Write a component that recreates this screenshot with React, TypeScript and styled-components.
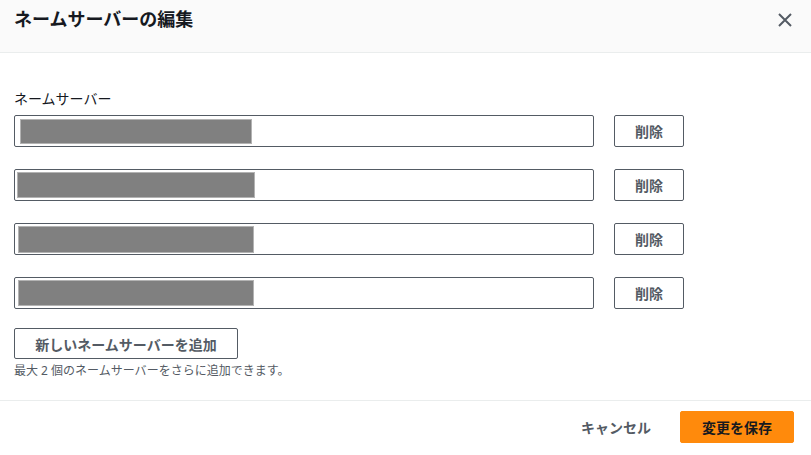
import styled, { createGlobalStyle } from "styled-components";

const GlobalStyle = createGlobalStyle`
  body {
    margin: 0;
    background: #ffffff;
    font-family: "Noto Sans", "Noto Sans CJK JP", sans-serif;
    color: #16191f;
  }
`;

const Modal = styled.div`
  width: 811px;
  height: 455px;
  display: flex;
  flex-direction: column;
  background: #ffffff;
`;

const Header = styled.div`
  height: 53px;
  box-sizing: border-box;
  background: #fafafa;
  border-bottom: 1px solid #eaeded;
  display: flex;
  justify-content: space-between;
  align-items: flex-start;
  padding: 6px 18px 0 14px;
`;

const Title = styled.h2`
  margin: 0;
  font-size: 18px;
  line-height: 26px;
  font-weight: 700;
  color: #16191f;
`;

const CloseButton = styled.button`
  border: none;
  background: none;
  padding: 0;
  margin-top: 6px;
  width: 16px;
  height: 16px;
  display: flex;
  cursor: pointer;
`;

const Body = styled.div`
  padding: 36px 14px 0 14px;
  flex: 1;
`;

const Label = styled.div`
  font-size: 14px;
  line-height: 20px;
  margin-bottom: 6px;
`;

const Rows = styled.div`
  display: flex;
  flex-direction: column;
  gap: 22px;
`;

const Row = styled.div`
  display: flex;
  align-items: center;
  gap: 20px;
`;

const Input = styled.div<{ $inset: number }>`
  width: 580px;
  height: 32px;
  box-sizing: border-box;
  border: 1px solid #545b64;
  border-radius: 2px;
  display: flex;
  align-items: center;
  padding-left: ${(p) => p.$inset}px;
`;

const Redacted = styled.div<{ $width: number; $height: number }>`
  width: ${(p) => p.$width}px;
  height: ${(p) => p.$height}px;
  background: #808080;
  border: 1px solid #b3b3b3;
  box-sizing: border-box;
`;

const Button = styled.button<{ $width: number }>`
  width: ${(p) => p.$width}px;
  height: 32px;
  box-sizing: border-box;
  background: #ffffff;
  border: 1px solid #545b64;
  border-radius: 2px;
  font-family: inherit;
  font-size: 14px;
  font-weight: 700;
  color: #545b64;
  padding: 0;
  cursor: pointer;
`;

const AddButton = styled(Button)`
  margin-top: 19px;
  height: 31px;
`;

const Hint = styled.div`
  margin-top: 4px;
  font-size: 12px;
  line-height: 16px;
  color: #545b64;
`;

const Footer = styled.div`
  border-top: 1px solid #eaeded;
  height: 55px;
  box-sizing: border-box;
  display: flex;
  justify-content: flex-end;
  align-items: center;
  gap: 29px;
  padding: 0 17px 2px 0;
`;

const LinkButton = styled.button`
  border: none;
  background: none;
  font-family: inherit;
  font-size: 14px;
  font-weight: 700;
  color: #545b64;
  padding: 0;
  cursor: pointer;
`;

const PrimaryButton = styled.button`
  width: 114px;
  height: 32px;
  background: #ff8a0c;
  border: 1px solid #ff8a0c;
  border-radius: 2px;
  font-family: inherit;
  font-size: 14px;
  font-weight: 700;
  color: #16191f;
  cursor: pointer;
`;

const servers = [
  { inset: 5, width: 232, height: 25 },
  { inset: 2, width: 238, height: 26 },
  { inset: 3, width: 236, height: 27 },
  { inset: 3, width: 236, height: 26 },
];

const App = () => {
  return (
    <>
      <GlobalStyle />
      <Modal>
        <Header>
          <Title>ネームサーバーの編集</Title>
          <CloseButton aria-label="閉じる">
            <svg width="16" height="16" viewBox="0 0 16 16">
              <path
                d="M2 2 L14 14 M14 2 L2 14"
                stroke="#545b64"
                strokeWidth="2"
                fill="none"
              />
            </svg>
          </CloseButton>
        </Header>
        <Body>
          <Label>ネームサーバー</Label>
          <Rows>
            {servers.map((s, i) => (
              <Row key={i}>
                <Input $inset={s.inset}>
                  <Redacted $width={s.width} $height={s.height} />
                </Input>
                <Button $width={70}>削除</Button>
              </Row>
            ))}
          </Rows>
          <AddButton $width={224}>新しいネームサーバーを追加</AddButton>
          <Hint>最大 2 個のネームサーバーをさらに追加できます。</Hint>
        </Body>
        <Footer>
          <LinkButton>キャンセル</LinkButton>
          <PrimaryButton>変更を保存</PrimaryButton>
        </Footer>
      </Modal>
    </>
  );
};

export default App;
